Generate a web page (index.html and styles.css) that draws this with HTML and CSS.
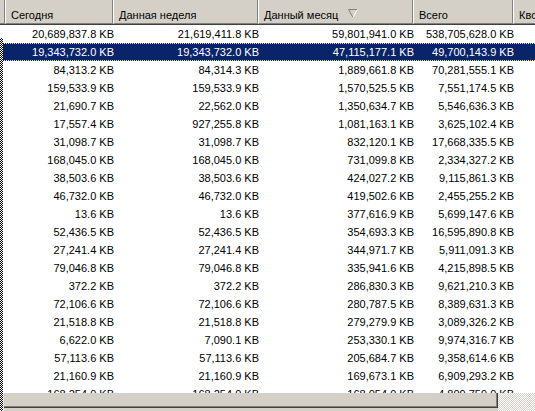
FILE: index.html
```html
<!DOCTYPE html>
<html>
<head>
<meta charset="utf-8">
<link rel="stylesheet" href="styles.css">
</head>
<body>
<div class="listview">
  <div class="header">
    <div class="hc h0"></div>
    <div class="hc h1">Сегодня</div>
    <div class="hc h2">Данная неделя</div>
    <div class="hc h3"><span>Данный месяц</span><svg class="sort" width="10" height="9" viewBox="0 0 10 9"><path d="M0.5 0.5H9.5" stroke="#808080" fill="none"/><path d="M0.5 0.5L5 8.5" stroke="#808080" fill="none"/><path d="M9.5 0.5L5 8.5" stroke="#ffffff" fill="none"/></svg></div>
    <div class="hc h4">Всего</div>
    <div class="hc h5">Квота</div>
  </div>
  <div class="body">
    <div class="row"><div class="c0"></div><div class="c1">20,689,837.8 KB</div><div class="c2">21,619,411.8 KB</div><div class="c3">59,801,941.0 KB</div><div class="c4">538,705,628.0 KB</div></div>
    <div class="row sel"><div class="c0"></div><div class="c1">19,343,732.0 KB</div><div class="c2">19,343,732.0 KB</div><div class="c3">47,115,177.1 KB</div><div class="c4">49,700,143.9 KB</div></div>
    <div class="row"><div class="c0"></div><div class="c1">84,313.2 KB</div><div class="c2">84,314.3 KB</div><div class="c3">1,889,661.8 KB</div><div class="c4">70,281,555.1 KB</div></div>
    <div class="row"><div class="c0"></div><div class="c1">159,533.9 KB</div><div class="c2">159,533.9 KB</div><div class="c3">1,570,525.5 KB</div><div class="c4">7,551,174.5 KB</div></div>
    <div class="row"><div class="c0"></div><div class="c1">21,690.7 KB</div><div class="c2">22,562.0 KB</div><div class="c3">1,350,634.7 KB</div><div class="c4">5,546,636.3 KB</div></div>
    <div class="row"><div class="c0"></div><div class="c1">17,557.4 KB</div><div class="c2">927,255.8 KB</div><div class="c3">1,081,163.1 KB</div><div class="c4">3,625,102.4 KB</div></div>
    <div class="row"><div class="c0"></div><div class="c1">31,098.7 KB</div><div class="c2">31,098.7 KB</div><div class="c3">832,120.1 KB</div><div class="c4">17,668,335.5 KB</div></div>
    <div class="row"><div class="c0"></div><div class="c1">168,045.0 KB</div><div class="c2">168,045.0 KB</div><div class="c3">731,099.8 KB</div><div class="c4">2,334,327.2 KB</div></div>
    <div class="row"><div class="c0"></div><div class="c1">38,503.6 KB</div><div class="c2">38,503.6 KB</div><div class="c3">424,027.2 KB</div><div class="c4">9,115,861.3 KB</div></div>
    <div class="row"><div class="c0"></div><div class="c1">46,732.0 KB</div><div class="c2">46,732.0 KB</div><div class="c3">419,502.6 KB</div><div class="c4">2,455,255.2 KB</div></div>
    <div class="row"><div class="c0"></div><div class="c1">13.6 KB</div><div class="c2">13.6 KB</div><div class="c3">377,616.9 KB</div><div class="c4">5,699,147.6 KB</div></div>
    <div class="row"><div class="c0"></div><div class="c1">52,436.5 KB</div><div class="c2">52,436.5 KB</div><div class="c3">354,693.3 KB</div><div class="c4">16,595,890.8 KB</div></div>
    <div class="row"><div class="c0"></div><div class="c1">27,241.4 KB</div><div class="c2">27,241.4 KB</div><div class="c3">344,971.7 KB</div><div class="c4">5,911,091.3 KB</div></div>
    <div class="row"><div class="c0"></div><div class="c1">79,046.8 KB</div><div class="c2">79,046.8 KB</div><div class="c3">335,941.6 KB</div><div class="c4">4,215,898.5 KB</div></div>
    <div class="row"><div class="c0"></div><div class="c1">372.2 KB</div><div class="c2">372.2 KB</div><div class="c3">286,830.3 KB</div><div class="c4">9,621,210.3 KB</div></div>
    <div class="row"><div class="c0"></div><div class="c1">72,106.6 KB</div><div class="c2">72,106.6 KB</div><div class="c3">280,787.5 KB</div><div class="c4">8,389,631.3 KB</div></div>
    <div class="row"><div class="c0"></div><div class="c1">21,518.8 KB</div><div class="c2">21,518.8 KB</div><div class="c3">279,279.9 KB</div><div class="c4">3,089,326.2 KB</div></div>
    <div class="row"><div class="c0"></div><div class="c1">6,622.0 KB</div><div class="c2">7,090.1 KB</div><div class="c3">253,330.1 KB</div><div class="c4">9,974,316.7 KB</div></div>
    <div class="row"><div class="c0"></div><div class="c1">57,113.6 KB</div><div class="c2">57,113.6 KB</div><div class="c3">205,684.7 KB</div><div class="c4">9,358,614.6 KB</div></div>
    <div class="row"><div class="c0"></div><div class="c1">21,160.9 KB</div><div class="c2">21,160.9 KB</div><div class="c3">169,673.1 KB</div><div class="c4">6,909,293.2 KB</div></div>
    <div class="row"><div class="c0"></div><div class="c1">168,254.0 KB</div><div class="c2">168,254.0 KB</div><div class="c3">168,054.0 KB</div><div class="c4">4,809,759.0 KB</div></div>
  </div>
  <div class="hscroll">
    <div class="thumb"><div class="thumb-face"></div></div>
    <div class="track"></div>
  </div>
  <div class="strip"></div>
</div>
</body>
</html>
```

FILE: styles.css
```css
html, body {
  margin: 0;
  padding: 0;
  background: #ffffff;
}
.listview {
  position: relative;
  width: 535px;
  height: 411px;
  overflow: hidden;
  display: flex;
  flex-direction: column;
  font-family: "Liberation Sans", Arial, sans-serif;
  font-size: 11px;
  color: #000000;
  background: #ffffff;
}
.header {
  display: flex;
  flex: 0 0 auto;
  height: 25px;
  background: #d4d0c8;
  border-bottom: 1px solid #404040;
  box-sizing: border-box;
}
.hc {
  flex: 0 0 auto;
  box-sizing: border-box;
  height: 24px;
  padding: 9px 0 2px 5px;
  line-height: 13px;
  border-left: 1px solid #ffffff;
  border-right: 1px solid #808080;
  border-bottom: 1px solid #808080;
  white-space: nowrap;
  overflow: hidden;
  display: flex;
  align-items: flex-start;
}
.h0 { width: 5px; border-left: 0; padding: 0; }
.h1 { width: 108px; }
.h2 { width: 145px; }
.h3 { width: 155px; }
.h4 { width: 100px; }
.h5 { flex: 1 1 auto; border-right: 0; }
.sort {
  margin-left: 10px;
  margin-top: 0;
  flex: 0 0 auto;
}
.body {
  flex: 1 1 auto;
  overflow: hidden;
}
.row {
  display: flex;
  height: 18px;
  line-height: 18px;
  white-space: nowrap;
}
.row > div {
  flex: 0 0 auto;
  text-align: right;
  overflow: visible;
}
.c0 { width: 6px; }
.c1 { width: 108px; }
.c2 { width: 145px; }
.c3 { width: 155px; }
.c4 { width: 100px; }
.row.sel {
  color: #ffffff;
  background:
    repeating-linear-gradient(90deg, #f3e3a8 0 1px, transparent 1px 2px) top left / 100% 1px no-repeat,
    repeating-linear-gradient(90deg, #f3e3a8 0 1px, transparent 1px 2px) bottom left / 100% 1px no-repeat,
    #0a246a;
}
.hscroll {
  flex: 0 0 18px;
  display: flex;
  background: repeating-conic-gradient(#ffffff 0 25%, #d4d0c8 0 50%) 0 0 / 2px 2px;
}
.thumb {
  margin-left: 4px;
  width: 494px;
  display: flex;
  flex-direction: column;
  background: #d4d0c8;
}
.thumb-face {
  height: 15px;
  box-sizing: border-box;
  background: #d4d0c8;
  border-right: 1px solid #404040;
  border-bottom: 1px solid #404040;
  box-shadow: inset -1px -1px 0 #808080;
}
.track {
  flex: 1 1 auto;
}
.strip {
  position: absolute;
  left: 0;
  top: 38px;
  bottom: 0;
  width: 3px;
  background: repeating-conic-gradient(#000000 0 25%, #ffffff 0 50%) 0 0 / 2px 2px;
}
```
